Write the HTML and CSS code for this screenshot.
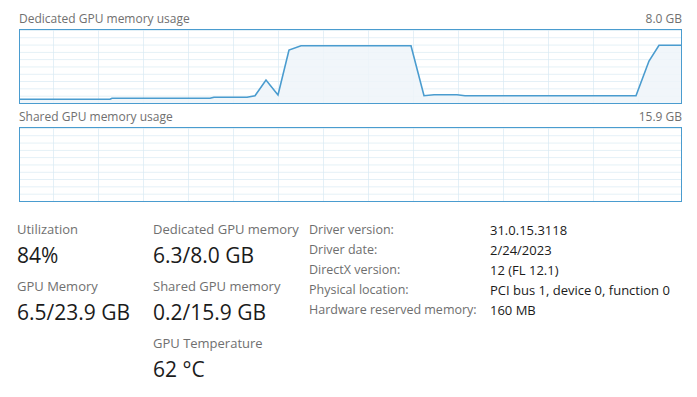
FILE: index.html
```html
<!DOCTYPE html>
<html>
<head>
  <title>GPU Performance</title>
  <link rel="stylesheet" href="styles.css">
</head>
<body>
  <div class="page">
    <!-- Dedicated memory graph -->
    <div class="chart-head">
      <span>Dedicated GPU memory usage</span>
      <span>8.0 GB</span>
    </div>
    <div class="chart">
      <svg viewBox="0 0 661 73" preserveAspectRatio="none">
        <defs>
          <pattern id="grid1" width="45" height="7.3" x="33" patternUnits="userSpaceOnUse">
            <path d="M0 0H45M0 0V7.3" fill="none" stroke="#d9eaf4" stroke-width="1.4"/>
          </pattern>
        </defs>
        <rect width="661" height="73" fill="url(#grid1)"/>
        <polygon class="area" points="0,69.3 90,69.3 92,68.3 190,68.3 194,67.3 227,67.3 235,65.7 246,50 258,65 269,20 281,15.7 391,15.7 404,65.7 414,64.7 437,64.7 445,65.7 616,65.7 629,31 639,15.3 661,15.3 661,73 0,73"/>
        <polyline class="line" points="0,69.3 90,69.3 92,68.3 190,68.3 194,67.3 227,67.3 235,65.7 246,50 258,65 269,20 281,15.7 391,15.7 404,65.7 414,64.7 437,64.7 445,65.7 616,65.7 629,31 639,15.3 661,15.3"/>
      </svg>
    </div>

    <!-- Shared memory graph -->
    <div class="chart-head">
      <span>Shared GPU memory usage</span>
      <span>15.9 GB</span>
    </div>
    <div class="chart">
      <svg viewBox="0 0 661 73" preserveAspectRatio="none">
        <defs>
          <pattern id="grid2" width="45" height="7.3" x="33" patternUnits="userSpaceOnUse">
            <path d="M0 0H45M0 0V7.3" fill="none" stroke="#d9eaf4" stroke-width="1.4"/>
          </pattern>
        </defs>
        <rect width="661" height="73" fill="url(#grid2)"/>
      </svg>
    </div>

    <!-- Stats -->
    <div class="stats">
      <div class="stat-col first">
        <div class="stat">
          <div class="stat-label">Utilization</div>
          <div class="stat-value">84%</div>
        </div>
        <div class="stat">
          <div class="stat-label">GPU Memory</div>
          <div class="stat-value">6.5/23.9 GB</div>
        </div>
      </div>
      <div class="stat-col second">
        <div class="stat">
          <div class="stat-label">Dedicated GPU memory</div>
          <div class="stat-value">6.3/8.0 GB</div>
        </div>
        <div class="stat">
          <div class="stat-label">Shared GPU memory</div>
          <div class="stat-value">0.2/15.9 GB</div>
        </div>
        <div class="stat">
          <div class="stat-label">GPU Temperature</div>
          <div class="stat-value">62 °C</div>
        </div>
      </div>
      <div class="info">
        <span class="info-key">Driver version:</span><span class="info-val">31.0.15.3118</span>
        <span class="info-key">Driver date:</span><span class="info-val">2/24/2023</span>
        <span class="info-key">DirectX version:</span><span class="info-val">12 (FL 12.1)</span>
        <span class="info-key">Physical location:</span><span class="info-val">PCI bus 1, device 0, function 0</span>
        <span class="info-key">Hardware reserved memory:</span><span class="info-val">160 MB</span>
      </div>
    </div>
  </div>
</body>
</html>
```

FILE: styles.css
```css
body {
  margin: 0;
  background: #fff;
  font-family: "Open Sans", "Noto Sans", sans-serif;
  color: #1b1b1b;
}
.page {
  width: 663px;
  padding: 10px 0 0 19px;
}
.chart-head {
  display: flex;
  justify-content: space-between;
  height: 19px;
  font-size: 12px;
  line-height: 17px;
  color: #707070;
}
.chart {
  height: 73px;
  border: 1px solid #4a9ccf;
  margin-bottom: 4px;
}
.chart svg {
  display: block;
  width: 100%;
  height: 100%;
}
.area {
  fill: #eef4f9;
  fill-opacity: 0.85;
}
.line {
  fill: none;
  stroke: #4a9ccf;
  stroke-width: 1.6;
}
.stats {
  display: flex;
  margin: 18px 0 0 -2px;
}
.stat-col {
  display: flex;
  flex-direction: column;
  gap: 7px;
}
.first {
  width: 136px;
}
.second {
  width: 156px;
}
.stat-label {
  font-size: 13px;
  line-height: 18px;
  color: #707070;
}
.stat-value {
  margin-top: 2px;
  font-size: 21px;
  line-height: 30px;
}
.info {
  display: grid;
  grid-template-columns: 181px auto;
  grid-auto-rows: 20px;
  line-height: 20px;
  align-content: start;
}
.info-key {
  font-size: 12.5px;
  color: #6e6e6e;
}
.info-val {
  font-size: 13px;
  color: #1b1b1b;
}
```
